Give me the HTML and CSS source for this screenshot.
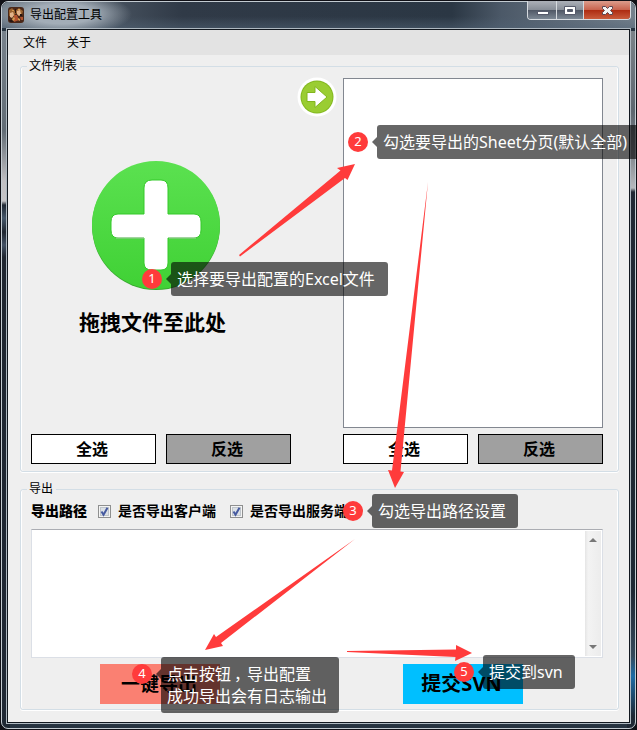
FILE: index.html
```html
<!DOCTYPE html>
<html lang="zh-CN">
<head>
<meta charset="utf-8">
<title>导出配置工具</title>
<link rel="stylesheet" href="styles.css">
</head>
<body>
<div class="window">
  <header class="titlebar">
    <svg class="app-icon" width="16" height="16" viewBox="0 0 16 16">
      <rect width="16" height="16" rx="3" fill="#4a2819"/>
      <path d="M1 3l3-2 3 3 4-3 4 3-1 4-3 1-3-3-3 4-4-1z" fill="#9a622f"/>
      <path d="M2 6l3-1 1 3-2 3-2-1zM9 4l3-1 1 4-2 2-2-2z" fill="#e2b48a"/>
      <path d="M6 8h3l2 5-5 2zM12 10h3v3h-2z" fill="#b3532e"/>
      <path d="M1 13h4v2H2zM7 2h1v4H7zM12 7h2v2h-2z" fill="#28150f"/>
      <path d="M5 10l2 1-1 3-2-1zM10 11l2 1v2l-2-1zM4 3h2v1H4zM10 2h2v1h-2z" fill="#d39a52"/>
    </svg>
    <h1>导出配置工具</h1>
    <div class="controls">
      <span class="ctl"><svg width="29" height="19"><rect x="9.500" y="10.500" width="11" height="3" fill="#fff" stroke="#575b6c"/></svg></span>
      <span class="ctl ctl-max"><svg width="26" height="19"><path d="M7.500 5.500h11v8h-11zM10.500 8.500v2h5v-2z" fill="#fff" fill-rule="evenodd" stroke="#575b6c"/></svg></span>
      <span class="ctl ctl-close"><svg width="47" height="19"><path d="M18.500 5.500h3l2 2 2-2h3v2l-2 2 2 2v2h-3l-2-2-2 2h-3v-2l2-2-2-2z" fill="#f5f5f5" stroke="#5c4650"/></svg></span>
    </div>
  </header>
  <main class="client">
    <nav class="menu"><span>文件</span><span>关于</span></nav>
    <fieldset class="group files">
      <legend>文件列表</legend>
      <div class="file-grid">
        <section class="drop">
          <svg class="plus" width="130" height="130" viewBox="0 0 130 130">
            <defs><linearGradient id="green" x2="0" y2="1"><stop stop-color="#5be150"/><stop offset="1" stop-color="#40d135"/></linearGradient></defs>
            <circle cx="65" cy="65" r="64" fill="#38a92f"/>
            <circle cx="65" cy="64" r="64" fill="url(#green)"/>
            <path d="M61 19h9q7 0 7 8v26h26q7 0 7 8v8q0 8-7 8H77v25q0 7-7 7h-9q-8 0-8-7V77H27q-7 0-7-8v-8q0-8 7-8h26V27q0-8 8-8z" fill="#fff" stroke="#35c92a"/>
            <path d="M78 77h27M25 77h28" stroke="#a9c8a6"/>
          </svg>
          <strong>拖拽文件至此处</strong>
        </section>
        <svg class="go" width="40" height="40" viewBox="0 0 40 40">
          <circle cx="20" cy="20" r="19.500" fill="#fff"/><circle cx="20" cy="20" r="16.500" fill="#83b81f"/><circle cx="20" cy="20" r="15.500" fill="#9acd32"/>
          <path d="M10 15.500h8V9.500l12 10.500-12 10.500v-6h-8z" fill="#fff" stroke="#82b51e"/>
        </svg>
        <div class="sheet-list"></div>
        <div class="pair pair-left"><button>全选</button><button class="invert">反选</button></div>
        <div class="pair pair-right"><button>全选</button><button class="invert">反选</button></div>
      </div>
    </fieldset>
    <fieldset class="group export">
      <legend>导出</legend>
      <div class="options">
        <b>导出路径</b>
        <label><svg class="check" width="13" height="13"><rect x=".5" y=".5" width="12" height="12" fill="#f4f4f4" stroke="#8e8f8f"/><rect x="2.500" y="2.500" width="8" height="8" fill="#dce1e6" stroke="#bfc5cb"/><path d="M3.500 6.500l2 3.200 4-7" fill="none" stroke="#465aa0" stroke-width="2"/></svg>是否导出客户端</label>
        <label><svg class="check" width="13" height="13"><rect x=".5" y=".5" width="12" height="12" fill="#f4f4f4" stroke="#8e8f8f"/><rect x="2.500" y="2.500" width="8" height="8" fill="#dce1e6" stroke="#bfc5cb"/><path d="M3.500 6.500l2 3.200 4-7" fill="none" stroke="#465aa0" stroke-width="2"/></svg>是否导出服务端</label>
      </div>
      <div class="log"><div class="scroll">
        <svg width="8" height="4"><path d="M0 4l4-4 4 4z" fill="#777"/></svg>
        <svg width="8" height="4"><path d="M0 0l4 4 4-4z" fill="#777"/></svg>
      </div></div>
      <div class="actions"><button class="run">一键导出</button><button class="commit">提交SVN</button></div>
    </fieldset>
  </main>
</div>
<svg class="arrows" width="637" height="730" viewBox="0 0 637 730" fill="#ff3b3b">
  <path d="M239 255L340.500 170.500 337 168 355 164 347.500 180 345 178 240 256.500z"/>
  <path d="M428 182L392 470.500 388 470 395 488 404 472 400.500 471.500z"/>
  <path d="M355 539L216 637 214 634 205 650 223 646 221 643z"/>
  <path d="M347 651L456 649.500 456 645 472 653 455 661 455.500 657 347 652z"/>
</svg>
<span class="badge b1">1</span><div class="tip t1">选择要导出配置的Excel文件</div>
<span class="badge b2">2</span><div class="tip t2">勾选要导出的Sheet分页(默认全部)</div>
<span class="badge b3">3</span><div class="tip t3">勾选导出路径设置</div>
<span class="badge b4">4</span><div class="tip t4">点击按钮<span class="comma">，</span>导出配置<br>成功导出会有日志输出</div>
<span class="badge b5">5</span><div class="tip t5">提交到svn</div>
</body>
</html>
```
FILE: styles.css
```css
* { box-sizing: border-box; }
body { position: relative; width: 637px; height: 730px; margin: 0; overflow: hidden; background: #101016; color: #000; font: 12px/16px "Noto Sans", "Noto Sans CJK SC", sans-serif; }
button { padding: 0; font-family: inherit; color: #000; }
.window {
  width: 635px; height: 728px; margin: 1px 0 0 1px; padding: 0 5px 5px; border: 1px solid #c3cbd1; border-radius: 7px;
  background:
    linear-gradient(#78828c 0, #626c75 100px, #c0bfc2 150px, #c5c4c6 170px, #202833 174px, #46576a 187px, #202630 201px, #435164 214px, #202630 226px, #1f2834 100%) 0 29px / 8px 100% no-repeat,
    linear-gradient(#7b8389 0, #5d666f 80px, #8b9197 130px, #b7b9bd 157px, #202833 161px, #1f2834 560px, #35485a 625px, #1d6ba5 645px, #1f2834 685px) 100% 29px / 8px 100% no-repeat,
    #263340;
}
.titlebar { display: flex; align-items: flex-start; height: 26px; margin: 0 -5px; padding-left: 6px; border-radius: 6px 6px 0 0; background: radial-gradient(ellipse 70px 22px at 60px 12px, #a3adb7 45%, transparent 100%), linear-gradient(transparent 55%, #52647680), linear-gradient(90deg, #6e7a86, #4a5562 100px, #303a47 180px, #2b3744 450px, #4c5968 500px, #75818c); }
.app-icon { margin-top: 5px; }
h1 { margin: 4px 0 0 6px; font-size: 12px; line-height: 17px; font-weight: 400; }
.controls { display: flex; height: 19px; margin: -1px 4px 0 auto; border: 1px solid #d6dadf; border-top: 0; border-radius: 0 0 4px 4px; overflow: hidden; }
.ctl { display: flex; width: 28px; background: linear-gradient(#acb0b8, #888e98 48%, #505866 52%, #7c8794); }
.ctl svg { flex: none; }
.ctl-max { width: 27px; border-left: 1px solid #d6dadf; }
.ctl-close { width: 47px; border-left: 1px solid #d6dadf; background: linear-gradient(#dc9c8c, #c9644f 48%, #ae2c12 52%, #c95b3c); }
.client { height: 694px; border: 1px solid #11171e; outline: 1px solid #aeb8c0; background: #efefef; margin: 1px 0 0; width: 623px; }
.menu { display: flex; gap: 20px; height: 25px; padding: 5px 15px 0; background: #e3e3e3; }
.group { display: block; position: relative; min-width: 0; margin: 0 10px 0 12px; padding: 0; border: 1px solid #d3dee6; border-radius: 3px; box-shadow: inset 1px 0 #fff, inset -1px 0 #fff, 0 1px #fff; }
legend { height: 16px; margin-left: 6px; padding: 0 3px 0 2px; line-height: 16px; }
.files { margin-top: 3px; height: 414px; }
.file-grid { display: grid; grid-template-columns: 260px 52px 260px; grid-template-rows: 350px 30px; row-gap: 6px; padding: 4px 0 0 10px; }
.drop { display: flex; flex-direction: column; align-items: center; padding-top: 83px; }
.plus { margin-right: 11px; }
.drop strong { margin: 15px 17px 0 0; font-size: 21px; line-height: 32px; white-space: nowrap; }
.go { margin: -1px 0 0 6px; }
.sheet-list { border: 1px solid #828790; background: #fff; }
.pair { display: flex; gap: 10px; }
.pair-right { grid-column: 3; }
.pair button { width: 125px; border: 1px solid #000; background: #fff; font-size: 16px; line-height: 26px; font-weight: 700; padding-right: 3px; }
.pair .invert { background: #a0a0a0; }
.export { margin-top: 9px; height: 229px; }
.options { display: flex; align-items: center; height: 28px; padding: 0 0 0 10px; font-size: 14px; font-weight: 700; white-space: nowrap; }
.options label { display: flex; align-items: center; margin-left: 11px; }
.options label + label { margin-left: 14px; }
.check { margin-right: 7px; }
.log { display: flex; width: 572px; height: 129px; margin: 4px 0 0 10px; border: 1px solid #dbdfe6; border-top-color: #abadb3; background: #fff; }
.scroll { display: flex; flex-direction: column; align-items: center; justify-content: space-between; width: 16px; margin: 1px 1px 1px auto; padding: 7px 0; background: linear-gradient(90deg, #e5e5e5, #f3f3f3 20%, #ececec); }
.actions { display: flex; gap: 183px; margin: 6px 0 0 79px; }
.actions button { width: 120px; height: 40px; border: 0; font-size: 20px; line-height: 40px; font-weight: 700; padding-right: 3px; }
.actions .run { padding-right: 2px; background: #fa8072; font-size: 19px; }
.commit { background: #00bfff; }
.arrows { position: absolute; left: 0; top: 0; }
.badge { position: absolute; width: 20px; height: 20px; border-radius: 50%; background: #ff3b3b; color: #fff; font-size: 13px; line-height: 19px; text-align: center; }
.tip { position: absolute; height: 34px; padding: 5px 6px; border-radius: 3px; background: rgb(0 0 0 / 60%); color: #fff; font-size: 16px; line-height: 24px; white-space: nowrap; }
.tip::before { content: ""; position: absolute; left: -5px; top: 12px; border: 5px solid transparent; border-left: 0; border-right-color: rgb(0 0 0 / 60%); }
.comma { display: inline-block; width: 16px; padding-left: 3px; line-height: 1; }
.b1 { left: 142px; top: 269px; } .t1 { left: 171px; top: 262px; width: 217px; }
.b2 { left: 348px; top: 132px; } .t2 { left: 377px; top: 125px; width: 265px; }
.b3 { left: 343px; top: 501px; } .t3 { left: 372px; top: 494px; width: 146px; }
.b4 { left: 132px; top: 664px; } .t4 { left: 161px; top: 657px; width: 178px; height: 56px; line-height: 22px; padding-top: 6px; }
.b5 { left: 454px; top: 662px; } .t5 { left: 483px; top: 655px; width: 92px; }
```
